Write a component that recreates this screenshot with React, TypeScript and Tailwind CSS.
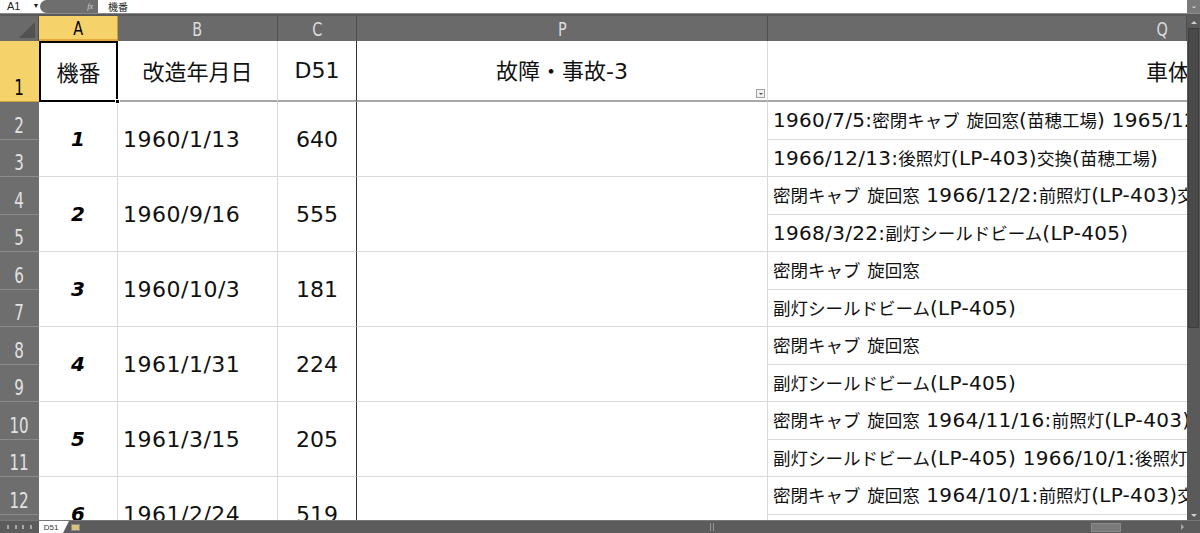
import React from "react";

const cjk = '"Noto Sans CJK JP", "Noto Sans", sans-serif';
const cellFont = { fontFamily: cjk };
const latinFont = { fontFamily: '"DejaVu Sans", "Noto Sans CJK JP", sans-serif' };
const hdrFont = { fontFamily: '"Liberation Sans Narrow", "DejaVu Sans Condensed", "Roboto", sans-serif' };

function Mixed({ text, latin, cjkSize }: { text: string; latin: string; cjkSize: string }) {
  const parts = text.split(/([\x20-\x7E]+)/).filter((p) => p.length > 0);
  return (
    <span className={cjkSize} style={cellFont}>
      {parts.map((p, i) =>
        /^[\x20-\x7E]+$/.test(p) ? (
          <span key={i} className={latin} style={latinFont}>
            {p}
          </span>
        ) : (
          <span key={i}>{p}</span>
        )
      )}
    </span>
  );
}

const data = [
  { n: "1", d: "1960/1/13", v: "640", q: ["1960/7/5:密閉キャブ 旋回窓(苗穂工場) 1965/12/1:前照灯", "1966/12/13:後照灯(LP-403)交換(苗穂工場)"] },
  { n: "2", d: "1960/9/16", v: "555", q: ["密閉キャブ 旋回窓 1966/12/2:前照灯(LP-403)交換", "1968/3/22:副灯シールドビーム(LP-405)"] },
  { n: "3", d: "1960/10/3", v: "181", q: ["密閉キャブ 旋回窓", "副灯シールドビーム(LP-405)"] },
  { n: "4", d: "1961/1/31", v: "224", q: ["密閉キャブ 旋回窓", "副灯シールドビーム(LP-405)"] },
  { n: "5", d: "1961/3/15", v: "205", q: ["密閉キャブ 旋回窓 1964/11/16:前照灯(LP-403)交換", "副灯シールドビーム(LP-405) 1966/10/1:後照灯(LP-403)"] },
  { n: "6", d: "1961/2/24", v: "519", q: ["密閉キャブ 旋回窓 1964/10/1:前照灯(LP-403)交換", ""] },
];

function ColHdr({ label, sel, last }: { label: string; sel?: boolean; last?: boolean }) {
  return (
    <div
      className={`flex items-center text-[20px] leading-none border-r ${
        sel ? "bg-[#f6d36a] text-black border-[#c9a23c] border-b-2 border-b-[#e3a83a]" : "bg-[#6a6a6a] text-[#dcdcdc] border-[#4f4f4f]"
      } ${last ? "justify-end pr-[17px]" : "justify-center"}`}
      style={hdrFont}
    >
      <span className="scale-x-[0.8] inline-block">{label}</span>
    </div>
  );
}

function RowHdr({ n, sel }: { n: number; sel?: boolean }) {
  return (
    <div
      className={`flex items-end justify-center pb-[2px] text-[21px] leading-none border-b ${
        sel ? "bg-[#f6d36a] text-black border-[#c9a23c]" : "bg-[#6e6e6e] text-[#e2e2e2] border-[#8c8c8c]"
      }`}
      style={hdrFont}
    >
      <span className="scale-x-[0.8] inline-block">{n}</span>
    </div>
  );
}

export default function App() {
  return (
    <div className="w-[1200px] h-[533px] overflow-hidden bg-[#5c5c5c] flex flex-col select-none">
      {/* formula bar */}
      <div className="h-[14px] bg-white flex items-center border-b border-[#8a8a8a] shrink-0">
        <div className="w-[40px] h-full flex items-center text-[11px] text-[#222] pl-[7px]" style={{ fontFamily: '"Liberation Sans", sans-serif' }}>
          <span>A1</span>
          <span className="ml-[12px] text-[7px]">▼</span>
        </div>
        <div className="w-[58px] h-full bg-[#6e6e6e] rounded-l-[7px] flex items-center justify-end pr-[5px]">
          <span className="text-[8px] italic text-[#d8d8d8]" style={{ fontFamily: '"Liberation Serif", serif' }}>fx</span>
        </div>
        <div className="flex-1 h-full pl-[10px] text-[10px] leading-[14px] text-[#222]" style={cellFont}>機番</div>
        <div className="w-[13px] h-full bg-[#7a7a7a] flex items-center justify-center text-[7px] text-white">⌄</div>
      </div>
      <div className="h-[2px] bg-[#5a5a5a] shrink-0" />
      <div className="flex-1 flex overflow-hidden">
        <div className="flex-1 overflow-hidden bg-white">
          <div className="grid grid-cols-[39px_79px_160px_79px_411px_1fr] grid-rows-[25px_61px_repeat(12,37.5px)]">
            {/* header row */}
            <div className="bg-[#6a6a6a] border-r border-[#4f4f4f] relative overflow-hidden">
              <div className="absolute right-[3px] bottom-[3px] w-0 h-0 border-l-[16px] border-l-transparent border-b-[16px] border-b-[#525252]" />
            </div>
            <ColHdr label="A" sel />
            <ColHdr label="B" />
            <ColHdr label="C" />
            <ColHdr label="P" />
            <ColHdr label="Q" last />

            {/* row 1 */}
            <RowHdr n={1} sel />
            <div className="relative border-2 border-black flex items-center justify-center text-[22px] text-[#111]" style={cellFont}>
              機番
              <div className="absolute -right-[4px] -bottom-[4px] w-[5px] h-[5px] bg-black border border-white" />
            </div>
            <div className="flex items-center justify-center border-r border-[#dadada] border-b-2 border-b-[#a8a8a8] text-[22px] text-[#111]" style={cellFont}>改造年月日</div>
            <div className="flex items-center justify-center border-r border-[#333] border-b-2 border-b-[#a8a8a8] text-[22px] text-[#111]" style={latinFont}>D51</div>
            <div className="relative flex items-center justify-center border-r border-[#dadada] border-b-2 border-b-[#a8a8a8] text-[#111]">
              <Mixed text="故障・事故-3" latin="text-[22px]" cjkSize="text-[22px]" />
              <div className="absolute right-[2px] bottom-[2px] w-[9px] h-[9px] border border-[#a0a0a0] bg-[#f0f0f0] flex items-center justify-center">
                <div className="w-0 h-0 border-l-[2px] border-r-[2px] border-t-[2px] border-l-transparent border-r-transparent border-t-[#555]" />
              </div>
            </div>
            <div className="flex items-center pl-[378px] border-b-2 border-b-[#a8a8a8] text-[22px] text-[#111] overflow-hidden whitespace-nowrap" style={cellFont}>
              車体改造
            </div>

            {data.map((r, i) => (
              <React.Fragment key={r.n}>
                <div className="grid grid-rows-[1fr_1fr]" style={{ gridRow: `${3 + i * 2} / span 2`, gridColumn: "1" }}>
                  <RowHdr n={2 + i * 2} />
                  <RowHdr n={3 + i * 2} />
                </div>
                <div
                  className="flex items-center justify-center border-r border-b border-[#dadada] text-[20px] text-black font-black italic"
                  style={{ gridRow: `${3 + i * 2} / span 2`, gridColumn: "2", fontFamily: '"DejaVu Sans", sans-serif' }}
                >
                  {r.n}
                </div>
                <div
                  className="flex items-center pl-[5px] border-r border-b border-[#dadada] text-[22px] tracking-[0.5px] text-[#111]"
                  style={{ ...latinFont, gridRow: `${3 + i * 2} / span 2`, gridColumn: "3" }}
                >
                  {r.d}
                </div>
                <div
                  className="flex items-center justify-center border-r border-r-[#333] border-b border-[#dadada] text-[22px] text-[#111]"
                  style={{ ...latinFont, gridRow: `${3 + i * 2} / span 2`, gridColumn: "4" }}
                >
                  {r.v}
                </div>
                <div className="border-r border-b border-[#dadada]" style={{ gridRow: `${3 + i * 2} / span 2`, gridColumn: "5" }} />
                {r.q.map((t, j) => (
                  <div
                    key={j}
                    className="flex items-center pl-[5px] border-b border-[#dadada] text-[#111] whitespace-nowrap overflow-hidden"
                    style={{ gridRow: `${3 + i * 2 + j}`, gridColumn: "6" }}
                  >
                    <Mixed text={t} latin="text-[20px] tracking-[0.3px]" cjkSize="text-[17.5px]" />
                  </div>
                ))}
              </React.Fragment>
            ))}
          </div>
        </div>
        {/* vertical scrollbar */}
        <div className="w-[13px] bg-[#5a5a5a] flex flex-col items-center shrink-0">
          <div className="h-[12px] flex items-center justify-center">
            <div className="w-0 h-0 border-l-[3px] border-r-[3px] border-b-[3px] border-l-transparent border-r-transparent border-b-[#d0d0d0]" />
          </div>
          <div className="w-[11px] h-[300px] bg-[#4a4a4a] border border-[#3e3e3e]" />
          <div className="flex-1" />
          <div className="h-[10px] flex items-center justify-center">
            <div className="w-0 h-0 border-l-[3px] border-r-[3px] border-t-[3px] border-l-transparent border-r-transparent border-t-[#d0d0d0]" />
          </div>
        </div>
      </div>
      {/* bottom bar */}
      <div className="h-[13px] bg-[#5c5c5c] border-t border-[#777] flex items-center shrink-0">
        <div className="w-[39px] flex items-center justify-around px-[4px]">
          <div className="w-[2px] h-[4px] bg-[#a8a8a8]" />
          <div className="w-[2px] h-[4px] bg-[#a8a8a8]" />
          <div className="w-[2px] h-[4px] bg-[#a8a8a8]" />
          <div className="w-[2px] h-[4px] bg-[#a8a8a8]" />
        </div>
        <div className="h-full w-[24px] bg-white flex items-end justify-center text-[8px] leading-[10px] text-[#333] -mt-[1px]" style={{ fontFamily: '"Liberation Sans", sans-serif' }}>D51</div>
        <div className="w-0 h-0 border-l-[6px] border-l-white border-b-[12px] border-b-transparent" />
        <div className="ml-[2px] w-[9px] h-[7px] bg-[#d9c27a] border border-[#888]" />
        <div className="flex-1 flex items-center pl-[630px]">
          <div className="w-[1px] h-[8px] bg-[#9a9a9a]" />
          <div className="ml-[2px] w-[1px] h-[8px] bg-[#9a9a9a]" />
        </div>
        <div className="w-[30px] h-[9px] bg-[#7a7a7a] border border-[#8a8a8a] mr-[60px]" />
        <div className="w-0 h-0 border-t-[3px] border-b-[3px] border-l-[3px] border-t-transparent border-b-transparent border-l-[#aaa] mr-[16px]" />
      </div>
    </div>
  );
}
